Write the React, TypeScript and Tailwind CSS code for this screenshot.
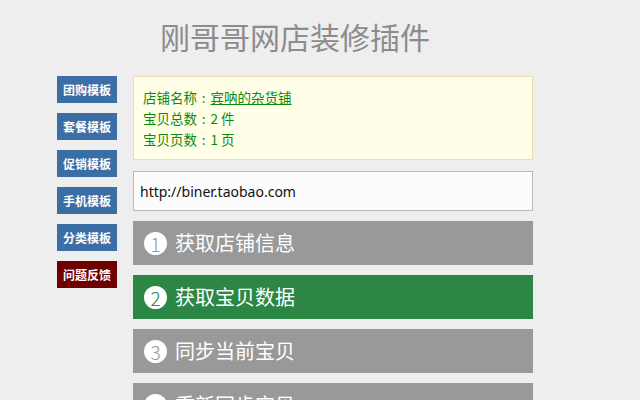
import React from "react";

const side = [
  { t: "团购模板", c: "bg-[#3a6ea5]" },
  { t: "套餐模板", c: "bg-[#3a6ea5]" },
  { t: "促销模板", c: "bg-[#3a6ea5]" },
  { t: "手机模板", c: "bg-[#3a6ea5]" },
  { t: "分类模板", c: "bg-[#3a6ea5]" },
  { t: "问题反馈", c: "bg-[#6e0000]" },
];

const steps = [
  { n: "1", t: "获取店铺信息", bg: "bg-[#999999]", fg: "text-[#999999]" },
  { n: "2", t: "获取宝贝数据", bg: "bg-[#2c8745]", fg: "text-[#2c8745]" },
  { n: "3", t: "同步当前宝贝", bg: "bg-[#999999]", fg: "text-[#999999]" },
  { n: "4", t: "重新同步宝贝", bg: "bg-[#999999]", fg: "text-[#999999]" },
];

const Colon = () => (
  <span
    className="inline-block w-[1em] text-center"
    style={{ fontFamily: '"Noto Sans CJK TC", sans-serif' }}
  >
    :
  </span>
);

export default function App() {
  return (
    <div
      className="w-[640px] h-[400px] overflow-hidden bg-[#eeeeee]"
      style={{ fontFamily: '"Noto Sans CJK SC", "Noto Sans", sans-serif' }}
    >
      <div className="flex pl-[57px]">
        <div className="flex flex-col gap-[10px] pt-[76px] w-[60px]">
          {side.map((s) => (
            <div
              key={s.t}
              className={`${s.c} h-[27px] flex items-center justify-center text-white text-[12px] font-semibold`}
            >
              {s.t}
            </div>
          ))}
        </div>
        <div className="ml-[16px] w-[400px] flex flex-col">
          <div className="h-[76px] flex items-center pl-[27px] text-[30px] text-[#8c8c8c] leading-none pb-[4px]">
            刚哥哥网店装修插件
          </div>
          <div className="h-[84px] border border-[#efdcb4] bg-[#ffffe8] pl-[9px] pt-[10px] text-[13.5px] leading-[21px] text-[#0d8a0d]">
            <div>
              店铺名称<Colon />
              <span className="underline">宾呐的杂货铺</span>
            </div>
            <div>
              宝贝总数<Colon />2 件
            </div>
            <div>
              宝贝页数<Colon />1 页
            </div>
          </div>
          <div
            className="mt-[11px] h-[40px] border border-[#bbbbbb] bg-[#fcfcfc] flex items-center pl-[6px] text-[14px] text-[#111]"
            style={{ fontFamily: '"Noto Sans", sans-serif' }}
          >
            http://biner.taobao.com
          </div>
          <div className="mt-[10px] flex flex-col gap-[10px]">
            {steps.map((s) => (
              <div
                key={s.n}
                className={`${s.bg} h-[44px] flex items-center pl-[11px] text-white`}
              >
                <span
                  className={`w-[23px] h-[23px] rounded-full bg-white ${s.fg} flex items-center justify-center text-[19px] font-light leading-none`}
                >
                  {s.n}
                </span>
                <span className="ml-[8px] text-[20px] leading-none">{s.t}</span>
              </div>
            ))}
          </div>
        </div>
      </div>
    </div>
  );
}
